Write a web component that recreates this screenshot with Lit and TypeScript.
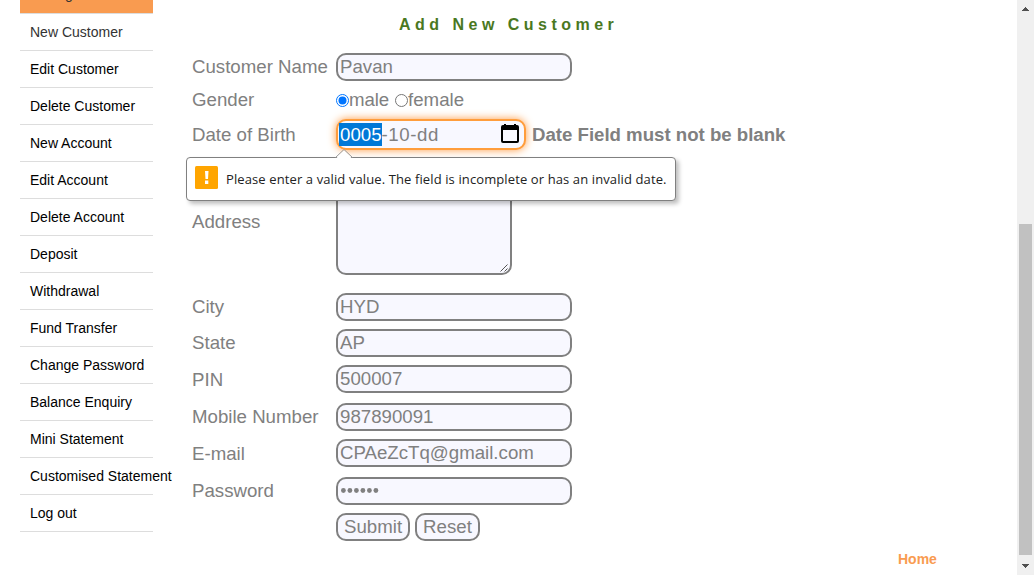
import { LitElement, html, css, svg } from "lit";
import { customElement } from "lit/decorators.js";
import { classMap } from "lit/directives/class-map.js";

const MENU = [
  "Manager", "New Customer", "Edit Customer", "Delete Customer", "New Account",
  "Edit Account", "Delete Account", "Deposit", "Withdrawal", "Fund Transfer",
  "Change Password", "Balance Enquiry", "Mini Statement", "Customised Statement", "Log out",
];

@customElement("side-menu")
class SideMenu extends LitElement {
  static styles = css`
    :host { display: block; width: 133px; margin: -24px 0 0 20px; flex: none; }
    .item {
      height: 36px; line-height: 37px; padding-left: 10px; white-space: nowrap;
      border-bottom: 1px solid #ddd; color: #000; font-size: 14px;
    }
    .head { background: #f99b50; color: #333; height: 37px; }
    .current { color: #333; }
  `;
  render() {
    return MENU.map((m, i) => html`<div class=${classMap({ item: true, head: i === 0, current: i === 1 })}>${m}</div>`);
  }
}

@customElement("scroll-track")
class ScrollTrack extends LitElement {
  static styles = css`
    :host {
      display: flex; flex-direction: column; align-items: center; flex: none;
      width: 17px; height: 575px; background: #f0f0f0;
    }
    svg { display: block; flex: none; }
    .space { height: 207px; flex: none; }
    .thumb { width: 13px; height: 331px; background: #c1c1c1; }
    .gap { height: 3px; }
  `;
  render() {
    return html`
      <svg width="17" height="17" shape-rendering="crispEdges">${svg`<path d="M8 7h1v1h1v1h1v1h1v1H5v-1h1V9h1V8h1z" fill="#505050"/>`}</svg>
      <div class="space"></div>
      <div class="thumb"></div>
      <div class="gap"></div>
      <svg width="17" height="17" shape-rendering="crispEdges">${svg`<path d="M5 6h7v1h-1v1h-1v1H9v1H8V9H7V8H6V7H5z" fill="#505050"/>`}</svg>
    `;
  }
}

@customElement("app-root")
class AppRoot extends LitElement {
  static styles = css`
    :host {
      display: flex; width: 1034px; height: 575px; overflow: hidden; background: #fff;
      position: relative; font-family: "Liberation Sans", Arial, sans-serif;
    }
    .main { flex: 1; padding: 15px 0 0 39px; min-width: 0; color: #808080; font-size: 18.67px; }
    .title {
      margin: 0 0 18px 207px; font-size: 16px; line-height: 20px; font-weight: bold;
      color: #4a781f; letter-spacing: 4.48px; white-space: nowrap;
    }
    .row { display: grid; grid-template-columns: 144px 1fr; align-items: center; height: 28px; margin-bottom: 8px; white-space: nowrap; }
    .name { margin-bottom: 4px; }
    .gender { height: 30px; margin-bottom: 4px; }
    .birth { height: 31px; margin-bottom: 18px; }
    .address { height: 107px; margin-bottom: 18px; }
    .wide { margin-bottom: 10px; }
    .low { padding-top: 2px; }
    .field {
      box-sizing: border-box; width: 236px; height: 28px; border: 2px solid #808080;
      border-radius: 10px; background: #f8f8ff; padding-left: 2px; line-height: 23px;
    }
    .date {
      width: 190px; height: 31px; border-color: #ff9d3c; padding: 0 5px 0 1px;
      display: flex; align-items: center; box-shadow: 0 0 8px #ff9a40; flex: none;
    }
    .selected { background: #0078d7; color: #fff; line-height: 23px; padding: 0 0 0 1px; }
    .rest { flex: 1; letter-spacing: 0.6px; }
    .cal { margin-bottom: 2px; flex: none; }
    .inline { display: flex; align-items: center; }
    .error { font-weight: bold; margin-left: 6px; letter-spacing: -0.02px; }
    .radio { display: block; flex: none; }
    .male { margin-right: 6px; letter-spacing: -0.1px; }
    .area { width: 176px; height: 107px; display: flex; align-items: flex-end; justify-content: flex-end; }
    .addr { align-self: start; margin-top: 43px; }
    .dots { display: block; margin-top: 8px; }
    .button { width: auto; padding: 0 6px; margin-right: 5px; }
    .home { font-size: 14px; line-height: 16px; font-weight: bold; color: #f99b50; margin: 10px 0 0 706px; }
    .bubble {
      position: absolute; left: 186px; top: 157px; width: 490px; height: 44px; box-sizing: border-box;
      border: 1px solid #808080; border-radius: 4px; background: #fff; display: flex; align-items: center;
      padding: 0 0 3px 8px; box-shadow: 3px 3px 4px rgba(0, 0, 0, 0.25);
      font: 13px "Open Sans", "Noto Sans", sans-serif; color: #222; white-space: nowrap;
    }
    .pointer { position: absolute; left: 148px; top: -9px; }
    .warn { margin-right: 8px; flex: none; }
    .message { padding-top: 2px; letter-spacing: 0.11px; }
  `;

  private input(label: string, value: string, cls = "", labelCls = "") {
    return html`<div class="row ${cls}"><span class=${labelCls}>${label}</span><div class="field">${value}</div></div>`;
  }

  render() {
    return html`
      <side-menu></side-menu>
      <div class="main">
        <div class="title">Add New Customer</div>
        ${this.input("Customer Name", "Pavan", "name")}
        <div class="row gender">
          <span>Gender</span>
          <div class="inline">
            <svg class="radio" width="13" height="13"><circle cx="6.5" cy="6.5" r="6" fill="#fff" stroke="#0075ff"/><circle cx="6.5" cy="6.5" r="4" fill="#0075ff"/></svg>
            <span class="male">male</span>
            <svg class="radio" width="13" height="13"><circle cx="6.5" cy="6.5" r="6" fill="#fff" stroke="#767676"/></svg>
            <span>female</span>
          </div>
        </div>
        <div class="row birth">
          <span>Date of Birth</span>
          <div class="inline">
            <div class="field date">
              <span class="selected">0005</span><span class="rest">-10-dd</span>
              <svg class="cal" width="18" height="19" viewBox="0 0 18 19"><path d="M3 0h2v1h8V0h2v1h1q2 0 2 2v14q0 2-2 2H2q-2 0-2-2V3q0-2 2-2h1zM2 6v11h14V6z" fill="#000" fill-rule="evenodd"/></svg>
            </div>
            <span class="error">Date Field must not be blank</span>
          </div>
        </div>
        <div class="row address">
          <span class="addr">Address</span>
          <div class="field area">
            <svg width="11" height="11"><path d="M1.5 9.5l7-7M5.5 9.5l3-3" stroke="#555" fill="none"/></svg>
          </div>
        </div>
        ${this.input("City", "HYD")}
        ${this.input("State", "AP")}
        ${this.input("PIN", "500007", "wide", "low")}
        ${this.input("Mobile Number", "987890091")}
        ${this.input("E-mail", "CPAeZcTq@gmail.com", "wide", "low")}
        <div class="row">
          <span>Password</span>
          <div class="field">
            <svg class="dots" width="40" height="8">${[0, 1, 2, 3, 4, 5].map((i) => svg`<circle cx=${3.4 + i * 6.5} cy="3.5" r="2.4" fill="#808080"/>`)}</svg>
          </div>
        </div>
        <div class="row">
          <span></span>
          <div class="inline"><div class="field button">Submit</div><div class="field button">Reset</div></div>
        </div>
        <div class="home">Home</div>
      </div>
      <scroll-track></scroll-track>
      <div class="bubble">
        <svg class="pointer" width="18" height="10"><path d="M1 9.5L9 1l8 8.500V10H1z" fill="#fff"/><path d="M0.500 8.500L9 .5l8.500 8" fill="none" stroke="#999"/></svg>
        <svg class="warn" width="23" height="23"><rect width="23" height="23" rx="1.500" fill="#ffa500"/><path d="M10 5h3.500l-.5 8h-2.500zM10 14.500h3.300V18H10z" fill="#fff"/></svg>
        <span class="message">Please enter a valid value. The field is incomplete or has an invalid date.</span>
      </div>
    `;
  }
}
